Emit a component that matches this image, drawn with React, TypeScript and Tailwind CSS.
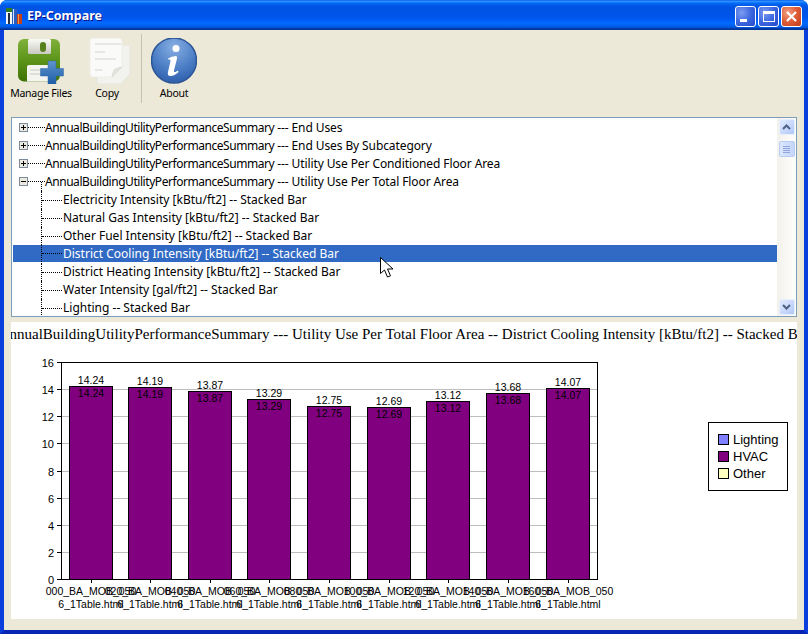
import { ReactNode } from 'react'

const treeRows = [
  { label: 'AnnualBuildingUtilityPerformanceSummary', detail: ' --- End Uses', kind: 'closed' },
  { label: 'AnnualBuildingUtilityPerformanceSummary', detail: ' --- End Uses By Subcategory', kind: 'closed' },
  { label: 'AnnualBuildingUtilityPerformanceSummary', detail: ' --- Utility Use Per Conditioned Floor Area', kind: 'closed' },
  { label: 'AnnualBuildingUtilityPerformanceSummary', detail: ' --- Utility Use Per Total Floor Area', kind: 'open' },
  { label: 'Electricity Intensity [kBtu/ft2] -- Stacked Bar', kind: 'child' },
  { label: 'Natural Gas Intensity [kBtu/ft2] -- Stacked Bar', kind: 'child' },
  { label: 'Other Fuel Intensity [kBtu/ft2] -- Stacked Bar', kind: 'child' },
  { label: 'District Cooling Intensity [kBtu/ft2] -- Stacked Bar', kind: 'child', selected: true },
  { label: 'District Heating Intensity [kBtu/ft2] -- Stacked Bar', kind: 'child' },
  { label: 'Water Intensity [gal/ft2] -- Stacked Bar', kind: 'child' },
  { label: 'Lighting -- Stacked Bar', kind: 'child' },
]

const bars = [
  { value: 14.24, prefix: '000' },
  { value: 14.19, prefix: '020' },
  { value: 13.87, prefix: '040' },
  { value: 13.29, prefix: '060' },
  { value: 12.75, prefix: '080' },
  { value: 12.69, prefix: '100' },
  { value: 13.12, prefix: '120' },
  { value: 13.68, prefix: '140' },
  { value: 14.07, prefix: '160' },
]

const legend = [
  { label: 'Lighting', color: '#8080ff', y: 434 },
  { label: 'HVAC', color: '#800080', y: 451 },
  { label: 'Other', color: '#ffffc0', y: 468 },
]

function AppIcon() {
  return (
    <svg width="16" height="16" viewBox="0 0 16 16">
      <rect x="0" y="0" width="6" height="5" fill="#2e7d20" />
      <rect x="0" y="4" width="6" height="12" fill="#f2f5f8" />
      <rect x="2" y="5" width="2" height="11" fill="#27303c" />
      <rect x="6" y="1" width="5" height="15" fill="#2a5fc0" />
      <rect x="7" y="1" width="1" height="15" fill="#dbe6f7" />
      <rect x="11" y="6" width="5" height="10" fill="#c8401a" />
      <rect x="12" y="6" width="1" height="10" fill="#f09a40" />
    </svg>
  )
}

function WindowButton({ close, children }: { close?: boolean; children: ReactNode }) {
  return (
    <div
      className={`flex h-[21px] w-[21px] items-center justify-center rounded-[3px] border border-white ${
        close
          ? 'bg-[radial-gradient(circle_at_30%_30%,#f0a088_0%,#e0603a_45%,#c23a18_100%)]'
          : 'bg-[radial-gradient(circle_at_30%_30%,#7d9cf0_0%,#3d68e0_50%,#2448c8_100%)]'
      }`}
    >
      {children}
    </div>
  )
}

function FloppyIcon() {
  return (
    <svg width="46" height="46" viewBox="19 38 46 46">
      <defs>
        <linearGradient id="floppy" x1="0" y1="0" x2="0" y2="1">
          <stop offset="0" stopColor="#7fb13a" />
          <stop offset="0.5" stopColor="#5c9418" />
          <stop offset="1" stopColor="#3f7206" />
        </linearGradient>
        <linearGradient id="shutter" x1="0" y1="0" x2="0" y2="1">
          <stop offset="0" stopColor="#fbfbf6" />
          <stop offset="1" stopColor="#c9c9c0" />
        </linearGradient>
        <linearGradient id="plus" x1="0" y1="0" x2="0" y2="1">
          <stop offset="0" stopColor="#5f93cf" />
          <stop offset="1" stopColor="#1d5da6" />
        </linearGradient>
      </defs>
      <rect x="19" y="39" width="42" height="42.5" rx="6" fill="url(#floppy)" />
      <rect x="29" y="39" width="23" height="15" rx="1.5" fill="url(#shutter)" />
      <rect x="41" y="42" width="6" height="10" rx="3" fill="#58801c" />
      <path d="M30 65h24v16.500h-26v-14.500a2 2 0 0 1 2-2z" fill="#f5f5f0" />
      <path d="M31 70h14M31 74h14" stroke="#c9c9c4" strokeWidth="1" />
      <path d="M49 61h8v7.500h7.500v7.500h-7.500v8h-8v-8h-7.500v-7.500h7.500z" fill="url(#plus)" stroke="#2d6aa8" strokeWidth="0.5" />
    </svg>
  )
}

function CopyIcon() {
  const lines = 'M95 44h26M95 52h10M95 59h21M95 70h7'
  return (
    <svg width="42" height="46" viewBox="89 38 42 46">
      <path d="M97 47q0-2 2-2h29q2 0 2 2v27l-9 10h-22q-2 0-2-2z" fill="#f2f2ee" stroke="#e6e5dc" strokeWidth="1" />
      <path d="M90 41q0-3 3-3h26q3 0 3 3v26l-10 10h-19q-3 0-3-3z" fill="#fafaf8" stroke="#eeeee8" strokeWidth="1" />
      <path d={lines} stroke="#d4d4d0" strokeWidth="1" />
      <path d="M112 77q1-7 3-8t7-2z" fill="#e4e4de" stroke="#cfcfc8" strokeWidth="0.5" />
    </svg>
  )
}

function InfoIcon() {
  return (
    <svg width="46" height="46" viewBox="151 38 46 46">
      <defs>
        <radialGradient id="info" cx="0.5" cy="0.2" r="0.85">
          <stop offset="0" stopColor="#86aee2" />
          <stop offset="0.6" stopColor="#4a7cc4" />
          <stop offset="1" stopColor="#2a5aa8" />
        </radialGradient>
      </defs>
      <circle cx="174" cy="60.500" r="22.500" fill="url(#info)" stroke="#2c5596" strokeWidth="1.500" />
      <circle cx="176" cy="48.500" r="3.500" fill="#ffffff" />
      <path d="M168 58.500q3.500-2.500 8-2.500q1.500 0 1 2.500l-3 12q-.5 2 1.500 1.500l2.500-1.500l.5 1.500q-4 4-8 4q-3.500 0-2.500-4l2.500-11q.5-2-2-1.500z" fill="#ffffff" />
    </svg>
  )
}

function ToolButton({ label, width, children }: { label: string; width: string; children: ReactNode }) {
  return (
    <div className={`flex flex-col items-center ${width}`}>
      <div className="flex h-[46px] items-center justify-center">{children}</div>
      <span className="mt-[2px] whitespace-nowrap text-[10.5px] tracking-[-0.25px]">{label}</span>
    </div>
  )
}

function Expander({ open }: { open: boolean }) {
  return (
    <svg width="9" height="9" viewBox="0 0 9 9" className="-mt-[2px] shrink-0">
      <rect x="0.500" y="0.500" width="8" height="8" fill="#eceadf" stroke="#7b8a9c" />
      <path d={open ? 'M2 4.500h5' : 'M2 4.500h5M4.500 2v5'} stroke="#000" strokeWidth="1" />
    </svg>
  )
}

function TreeRow({ label, detail, kind, selected }: { label: string; detail?: string; kind: string; selected?: boolean }) {
  if (kind === 'child') {
    return (
      <div className={`flex h-[18px] items-stretch pl-[28px] ${selected ? 'border-b border-white bg-[#316ac5] text-white' : ''}`}>
        <div className="w-px border-l border-dotted border-black" />
        <div className="w-[20px] self-center border-t border-dotted border-black" />
        <span className="self-center whitespace-nowrap pl-px">{label}</span>
      </div>
    )
  }
  return (
    <div className="relative flex h-[18px] items-center pl-[6px]">
      <Expander open={kind === 'open'} />
      <div className="-mt-[2px] w-[17px] border-t border-dotted border-black" />
      <span className="whitespace-pre">
        <span className="tracking-[-0.45px]">{label}</span>
        <span className="tracking-[-0.1px]">{detail}</span>
      </span>
      {kind === 'open' && <div className="absolute left-[28px] top-[9px] h-[9px] border-l border-dotted border-black" />}
    </div>
  )
}

function ScrollButton({ up }: { up: boolean }) {
  return (
    <div className="flex h-[16px] w-[16px] items-center justify-center rounded-[2px] border border-[#e8eefc] bg-[linear-gradient(135deg,#e1eafe_0%,#c6d6fb_60%,#aec8f7_100%)]">
      <svg width="9" height="6" viewBox="0 0 9 6">
        <path d={up ? 'M1 5l3.500-3.500l3.500 3.500' : 'M1 1l3.500 3.500l3.500-3.500'} fill="none" stroke="#4d6185" strokeWidth="2" />
      </svg>
    </div>
  )
}

function Scrollbar() {
  return (
    <div className="flex h-full w-[19px] shrink-0 flex-col items-center justify-between bg-[linear-gradient(90deg,#f3f1ec_0%,#fefefb_100%)] py-[1px]">
      <div className="flex flex-col items-center gap-[6px]">
        <ScrollButton up />
        <div className="flex h-[16px] w-[16px] flex-col items-center justify-center gap-px rounded-[2px] border border-[#b8ccf5] bg-[linear-gradient(90deg,#dce6fd_0%,#c6d6fb_100%)]">
          <div className="h-px w-[7px] bg-[#8ea6dc]" />
          <div className="h-px w-[7px] bg-[#8ea6dc]" />
          <div className="h-px w-[7px] bg-[#8ea6dc]" />
          <div className="h-px w-[7px] bg-[#8ea6dc]" />
        </div>
      </div>
      <ScrollButton up={false} />
    </div>
  )
}

function Chart() {
  const scale = 13.56
  const base = 579
  return (
    <svg width="786" height="273" viewBox="11 346 786 273" className="block font-['Liberation_Sans',Arial,sans-serif] text-[10.5px]">
      {[2, 4, 6, 8, 10, 12, 14].map(v => (
        <line key={v} x1="61" x2="597" y1={Math.round(base - v * scale) + 0.5} y2={Math.round(base - v * scale) + 0.5} stroke="#bdbdbd" />
      ))}
      {[0, 2, 4, 6, 8, 10, 12, 14, 16].map(v => {
        const y = Math.round(base - v * scale) + 0.5
        return (
          <g key={v}>
            <line x1="57" x2="61" y1={y} y2={y} stroke="#000" />
            <text x="54" y={y + 4} textAnchor="end" className="text-[11px]">{v}</text>
          </g>
        )
      })}
      {bars.map((b, i) => {
        const left = Math.floor(69 + i * 59.625)
        const top = Math.round(base - b.value * scale)
        const mid = left + 22
        return (
          <g key={b.prefix}>
            <rect x={left + 0.5} y={top + 0.5} width="43" height={base - top} fill="#800080" stroke="#000" />
            <text x={mid} y={top - 2} textAnchor="middle">{b.value.toFixed(2)}</text>
            <text x={mid} y={top + 11} textAnchor="middle">{b.value.toFixed(2)}</text>
            <line x1={mid + 0.5} x2={mid + 0.5} y1="579" y2="583" stroke="#000" />
            <text x={mid} y="595" textAnchor="middle">{b.prefix}_BA_MOB_050</text>
            <text x={mid} y="608" textAnchor="middle">6_1Table.html</text>
          </g>
        )
      })}
      <rect x="61.500" y="362.500" width="536" height="217" fill="none" stroke="#000" />
      <rect x="708.500" y="422.500" width="79" height="68" fill="#fff" stroke="#000" />
      {legend.map(item => (
        <g key={item.label}>
          <rect x="718.500" y={item.y + 0.5} width="10" height="10" fill={item.color} stroke="#000" />
          <text x="733" y={item.y + 10} className="text-[13px]">{item.label}</text>
        </g>
      ))}
    </svg>
  )
}

export default function App() {
  return (
    <div className="relative flex h-[634px] w-[808px] flex-col overflow-hidden rounded-t-[7px] bg-[#0a4ce0] font-['Noto_Sans',Tahoma,sans-serif] text-[12px] text-black">
      {/* title bar */}
      <div className="flex h-[30px] shrink-0 items-center bg-[linear-gradient(180deg,#0058ee_0%,#3593ff_4%,#288eff_6%,#127dff_8%,#036ffc_10%,#0262ee_14%,#0057e5_20%,#0054e3_24%,#0055eb_56%,#005bf5_66%,#026afe_76%,#0062ef_86%,#0052d6_92%,#0040ab_94%,#003092_100%)] pl-[6px] pr-[6px] pt-[2px]">
        <AppIcon />
        <span className="ml-[5px] text-[12.5px] font-bold text-white [text-shadow:1px_1px_#0f1089]">EP-Compare</span>
        <div className="ml-auto flex gap-[2px]">
          <WindowButton>
            <div className="mt-[8px] mr-[5px] h-[3px] w-[7px] bg-white" />
          </WindowButton>
          <WindowButton>
            <div className="h-[11px] w-[12px] border border-t-[3px] border-white" />
          </WindowButton>
          <WindowButton close>
            <svg width="11" height="11" viewBox="0 0 11 11">
              <path d="M1 1l9 9M10 1l-9 9" stroke="#fff" strokeWidth="2.200" />
            </svg>
          </WindowButton>
        </div>
      </div>

      <div className="flex min-h-0 flex-1 flex-col border-x-4 border-b-4 border-x-[#0a3fdc] border-b-[#0526b4] bg-[#ece9d8]">
        {/* toolbar */}
        <div className="flex h-[87px] shrink-0 items-start pl-[6px] pt-[8px]">
          <ToolButton label="Manage Files" width="w-[62px]"><FloppyIcon /></ToolButton>
          <div className="ml-[4px]">
            <ToolButton label="Copy" width="w-[62px]">
              <div className="pl-[6px]"><CopyIcon /></div>
            </ToolButton>
          </div>
          <div className="ml-[3px] -mt-[4px] h-[69px] w-px bg-[#c5c2b8]" />
          <div className="ml-[9px]">
            <ToolButton label="About" width="w-[46px]"><InfoIcon /></ToolButton>
          </div>
        </div>

        <div className="flex min-h-0 flex-1 flex-col px-[7px] pb-[11px]">
          {/* tree */}
          <div className="flex h-[200px] shrink-0 border border-[#7f9db9] bg-white">
            <div className="min-w-0 flex-1 overflow-hidden pl-px pt-px">
              {treeRows.map((row, i) => (
                <TreeRow key={i} {...row} />
              ))}
            </div>
            <Scrollbar />
          </div>

          {/* chart panel */}
          <div className="mt-[5px] flex min-h-0 flex-1 flex-col overflow-hidden bg-white">
            <div className="flex h-[24px] shrink-0 items-center justify-center font-['Liberation_Serif','Times_New_Roman',serif] text-[15px]">
              <span className="shrink-0 whitespace-nowrap">
                AnnualBuildingUtilityPerformanceSummary --- Utility Use Per Total Floor Area -- District Cooling Intensity [kBtu/ft2] -- Stacked Bar
              </span>
            </div>
            <Chart />
          </div>
        </div>
      </div>

      {/* mouse pointer */}
      <svg width="14" height="22" viewBox="0 0 14 22" className="absolute left-[380px] top-[257px]">
        <path d="M.5 .5v16l4-3.500l3 7l3-1.200l-3-6.800h5.500z" fill="#fff" stroke="#000" strokeWidth="1" />
      </svg>
    </div>
  )
}
